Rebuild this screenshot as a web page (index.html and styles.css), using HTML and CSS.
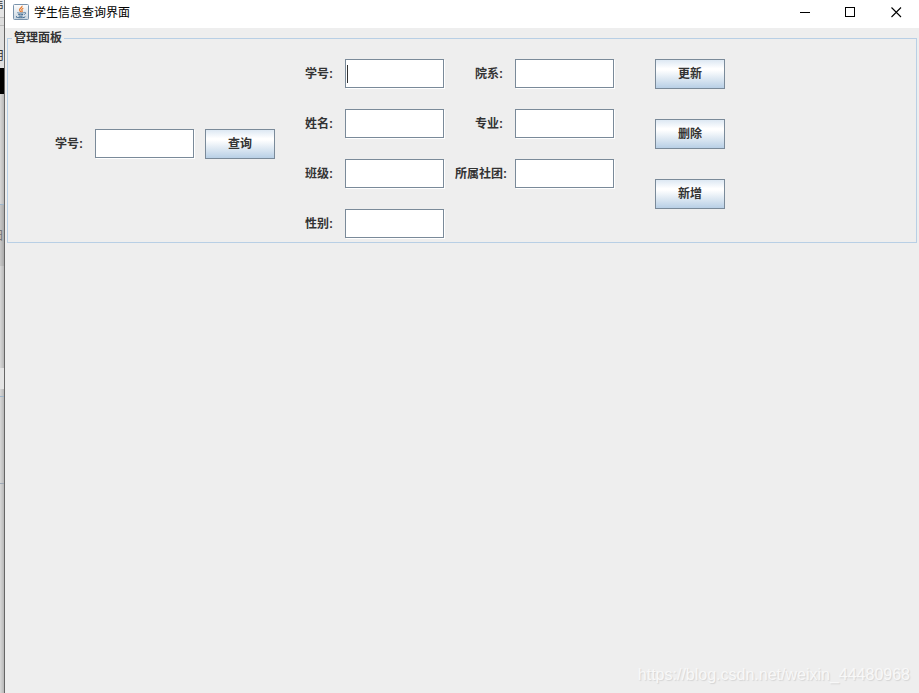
FILE: index.html
```html
<!DOCTYPE html>
<html lang="zh-CN">
<head>
<meta charset="utf-8">
<title>学生信息查询界面</title>
<link rel="stylesheet" href="styles.css">
</head>
<body>
<div class="desktop">
  <div class="backdrop" aria-hidden="true">
    <div class="strip strip-head">信</div>
    <div class="strip strip-bar"></div>
    <div class="strip strip-tool">用</div>
    <div class="strip strip-black"></div>
    <div class="strip strip-gray"></div>
    <div class="strip strip-field">日</div>
    <div class="strip strip-light"></div>
    <div class="strip strip-white"></div>
    <div class="strip strip-line"></div>
    <div class="strip strip-rest"></div>
  </div>
  <main class="window">
    <header class="titlebar">
      <svg class="app-icon" width="16" height="16" viewBox="0 0 16 16">
        <defs>
          <linearGradient id="tile" x1="0" y1="0" x2="0" y2="1">
            <stop offset="0" stop-color="#fdfdfd"/>
            <stop offset="1" stop-color="#c9d6e0"/>
          </linearGradient>
        </defs>
        <rect x=".5" y=".5" width="15" height="15" rx="1" fill="url(#tile)" stroke="#7893ac"/>
        <path d="M9 1.8c.8 2-3.400 2.600-2.300 4.600.3.700.8 1.100 1.100 1.700M10.300 4.200c-1.500.8-2 1.400-1.300 2.300.5.700.1 1.300-.5 1.700" fill="none" stroke="#e8792b" stroke-width="1.200"/>
        <path d="M4.500 8.500c-1 .6 5 .9 6.300.1M11.300 8.400c1.800-.4 1.800 1.600-.1 2M5.200 10.400c1.300.5 3.700.5 5 0M5.700 12c1.200.4 3 .4 4 0M4 12.300c-2.200.8 0 1.400 3.800 1.400 3.200 0 5-.5 4.200-1.200" fill="none" stroke="#456f94"/>
      </svg>
      <h1 class="title">学生信息查询界面</h1>
      <div class="window-buttons">
        <button class="window-button" type="button" aria-label="最小化"><svg width="11" height="11" viewBox="0 0 11 11" shape-rendering="crispEdges"><path d="M1 5.500h10" stroke="#000"/></svg></button>
        <button class="window-button" type="button" aria-label="最大化"><svg width="11" height="11" viewBox="0 0 11 11" shape-rendering="crispEdges"><path d="M.5 .5h9v9h-9z" fill="none" stroke="#000"/></svg></button>
        <button class="window-button" type="button" aria-label="关闭"><svg width="11" height="11" viewBox="0 0 11 11"><path d="M.5 .5l9.500 9.500M10 .5l-9.500 9.500" stroke="#000" stroke-width="1.100"/></svg></button>
      </div>
    </header>
    <form>
      <fieldset class="panel">
        <legend>管理面板</legend>
        <div class="panel-body">
          <div class="search">
            <label for="query">学号:</label>
            <input id="query" type="text">
            <button class="action" type="button">查询</button>
          </div>
          <div class="details">
            <label for="number">学号:</label>
            <input id="number" class="with-caret" type="text">
            <label class="indent" for="department">院系:</label>
            <input id="department" type="text">
            <label for="name">姓名:</label>
            <input id="name" type="text">
            <label class="indent" for="major">专业:</label>
            <input id="major" type="text">
            <label for="class">班级:</label>
            <input id="class" type="text">
            <label for="club">所属社团:</label>
            <input id="club" type="text">
            <label for="gender">性别:</label>
            <input id="gender" type="text">
          </div>
          <div class="actions">
            <button class="action" type="button">更新</button>
            <button class="action" type="button">删除</button>
            <button class="action" type="button">新增</button>
          </div>
        </div>
      </fieldset>
    </form>
    <footer class="watermark">https://blog.csdn.net/weixin_44480968</footer>
  </main>
</div>
</body>
</html>
```
FILE: styles.css
```css
* {
  box-sizing: border-box;
}

body {
  margin: 0;
  background: #eee;
  color: #333;
  font-family: "Liberation Sans", "Noto Sans CJK SC", sans-serif;
  font-size: 12px;
  line-height: 16px;
}

button,
input {
  font: inherit;
  color: inherit;
}

.desktop {
  display: flex;
  min-height: 100vh;
}

/* Sliver of the application behind the window */
.backdrop {
  display: flex;
  flex-direction: column;
  width: 5px;
  overflow: hidden;
  border-right: 1px solid #666;
  background: linear-gradient(to right, #d8d8d8, #b8b8b8);
}

.strip {
  display: flex;
  justify-content: flex-end;
  flex: none;
  overflow: hidden;
}

.strip-head {
  height: 18px;
  align-items: flex-start;
  line-height: 8px;
  background: #e4e4e4;
  border-bottom: 1px solid #bbb;
}

.strip-bar {
  height: 8px;
  background: #ddd;
  border-bottom: 1px solid #bbb;
}

.strip-tool {
  height: 42px;
  align-items: flex-end;
  line-height: 24px;
  background: #e0e0e0;
}

.strip-black {
  height: 26px;
  background: #000;
}

.strip-gray {
  height: 111px;
  border-bottom: 1px solid #9fb6cb;
}

.strip-field {
  height: 61px;
  line-height: 62px;
  color: #777;
  background: linear-gradient(to right, #c8c8c8, #aaa);
}

.strip-light {
  height: 102px;
}

.strip-white {
  height: 21px;
  background: #e4e4e4;
}

.strip-line {
  height: 8px;
  border-bottom: 1px solid #9fb6cb;
}

.strip-rest {
  height: 87px;
  border-bottom: 1px solid #9fa9b5;
}

.window {
  display: flex;
  flex: 1;
  flex-direction: column;
  min-width: 0;
}

.titlebar {
  display: flex;
  height: 28px;
  padding-left: 8px;
  background: #fff;
  color: #000;
}

.app-icon {
  margin-top: 4px;
}

.title {
  margin: 5px auto 0 5px;
  font-size: 12px;
  font-weight: 400;
}

.window-buttons {
  display: flex;
  height: 24px;
}

.window-button {
  display: flex;
  align-items: center;
  justify-content: center;
  width: 46px;
  padding: 0;
  border: 0;
  background: none;
}

.panel {
  min-width: 0;
  margin: 2px 2px 0;
  padding: 13px 0 3px 47px;
  border: 1px solid #b8cfe5;
  font-weight: 700;
}

.panel legend {
  margin-left: -43px;
  padding: 0 2px;
}

.panel-body {
  display: flex;
}

.search {
  display: flex;
  height: 30px;
  margin: 70px 30px 0 0;
}

.panel label {
  flex: none;
  width: 40px;
  line-height: 30px;
  white-space: nowrap;
}

.panel input {
  flex: none;
  width: 99px;
  height: 29px;
  padding: 0 2px;
  border: 1px solid #7a8a99;
  border-radius: 0;
  outline: none;
  background: #fff;
  box-shadow: 1px 1px 0 #fff;
}

.panel .with-caret {
  background: linear-gradient(#333, #333) 1px 5px / 1px 18px no-repeat #fff;
}

.action {
  flex: none;
  width: 70px;
  height: 30px;
  padding: 0;
  border: 1px solid #7a8a99;
  border-radius: 0;
  background: linear-gradient(#dde8f3, #fff 30%, #fff 36%, #b8cfe5);
}

.search .action {
  margin-left: 11px;
}

.details {
  display: grid;
  grid-template-columns: 40px 110px 60px 100px;
  grid-auto-rows: 30px;
  row-gap: 20px;
}

.panel .indent {
  margin-left: 20px;
}

.actions {
  display: flex;
  flex-direction: column;
  gap: 30px;
  margin-left: 40px;
}

.watermark {
  margin: auto 9px 8px auto;
  color: #f8f8f8;
  font-size: 16px;
  line-height: 20px;
  text-shadow: 1px 1px 1px #d4d4d4;
}
```
